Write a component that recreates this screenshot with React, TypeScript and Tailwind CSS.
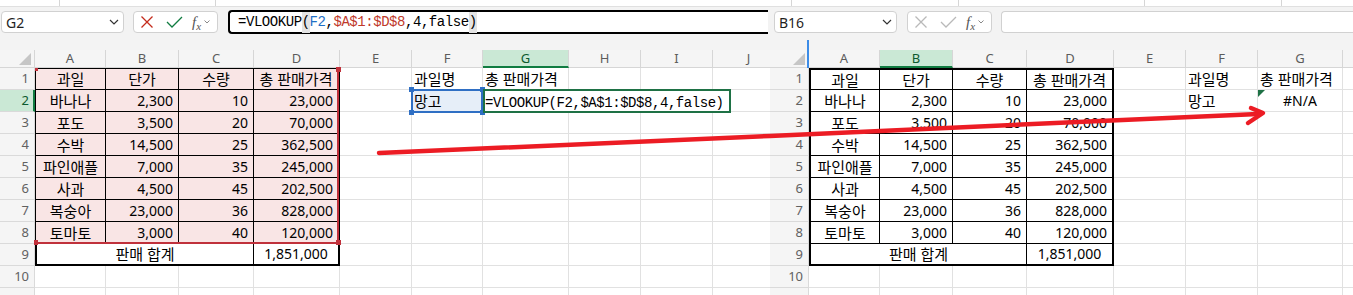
import React from "react";

const fruits: string[][] = [
  ["과일", "단가", "수량", "총 판매가격"],
  ["바나나", "2,300", "10", "23,000"],
  ["포도", "3,500", "20", "70,000"],
  ["수박", "14,500", "25", "362,500"],
  ["파인애플", "7,000", "35", "245,000"],
  ["사과", "4,500", "45", "202,500"],
  ["복숭아", "23,000", "36", "828,000"],
  ["토마토", "3,000", "40", "120,000"],
];

const LW = ["w-[71px]", "w-[73px]", "w-[75px]", "w-[86px]", "w-[72px]", "w-[71px]", "w-[86px]", "w-[72px]", "w-[72px]", "w-[72px]"];
const RW = ["w-[71px]", "w-[73px]", "w-[74px]", "w-[87px]", "w-[72px]", "w-[72px]", "w-[85px]", "w-[72px]"];
const GRID = "border-r border-b border-[#e1e1e1]";

type Spec = { w: string; t?: string; al?: "l" | "c" | "r"; b: string; bg?: string; tri?: boolean };

function tblL(r: number, c: number): string {
  const top = r === 1;
  if (c === 0) return top ? "border-l border-t border-r border-b border-black" : "border-l border-r border-b border-black";
  if (c === 3) return top ? "border-t border-r-2 border-b border-black" : "border-r-2 border-b border-black";
  return top ? "border-t border-r border-b border-black" : "border-r border-b border-black";
}

function tblR(r: number, c: number): string {
  const top = r === 1;
  if (c === 0) return top ? "border-l-2 border-t-2 border-r border-b border-black" : "border-l-2 border-r border-b border-black";
  if (c === 3) return top ? "border-t-2 border-r-2 border-b border-black" : "border-r-2 border-b border-black";
  return top ? "border-t-2 border-r border-b border-black" : "border-r border-b border-black";
}

function buildRows(side: "L" | "R"): Spec[][] {
  const L = side === "L";
  const W = L ? LW : RW;
  const rows: Spec[][] = [];
  for (let r = 1; r <= 11; r++) {
    const row: Spec[] = [];
    if (r <= 8) {
      for (let c = 0; c < 4; c++) {
        row.push({
          w: W[c],
          t: fruits[r - 1][c],
          al: r === 1 || c === 0 ? "c" : "r",
          b: L ? tblL(r, c) : tblR(r, c),
          bg: L ? "bg-[#f9e5e5]" : "bg-white",
        });
      }
    } else if (r === 9) {
      row.push({ w: L ? "w-[219px]" : "w-[218px]", t: "판매 합계", al: "c", b: "border-l-2 border-r border-b-2 border-black" });
      row.push({ w: W[3], t: "1,851,000", al: "c", b: "border-r-2 border-b-2 border-black" });
    } else {
      for (let c = 0; c < 4; c++) row.push({ w: W[c], b: GRID });
    }
    for (let c = 4; c < W.length; c++) {
      const s: Spec = { w: W[c], b: GRID, al: "l" };
      if (r === 1 && c === 5) s.t = "과일명";
      if (r === 1 && c === 6) s.t = "총 판매가격";
      if (r === 2 && c === 5) {
        s.t = "망고";
        if (L) s.bg = "bg-[#e6eef8]";
      }
      if (!L && r === 2 && c === 6) {
        s.t = "#N/A";
        s.al = "c";
        s.tri = true;
      }
      row.push(s);
    }
    rows.push(row);
  }
  return rows;
}

function CellView({ s }: { s: Spec }) {
  const ko = s.t ? /[가-힣]/.test(s.t) : false;
  const size = ko ? "text-[15px]" : "text-[14px]";
  const just = s.al === "c" ? "justify-center" : s.al === "r" ? "justify-end pr-[5px]" : "justify-start pl-[2px]";
  return (
    <div className={`relative flex h-full shrink-0 items-center whitespace-nowrap leading-[22px] text-black ${s.w} ${s.b} ${s.bg ?? "bg-white"} ${size} ${just}`}>
      {s.tri && (
        <svg className="absolute left-0 top-0" width="7" height="7" viewBox="0 0 7 7">
          <polygon points="0,0 7,0 0,7" fill="#1e7145" />
        </svg>
      )}
      {s.t}
    </div>
  );
}

function Sheet({ side }: { side: "L" | "R" }) {
  const L = side === "L";
  const W = L ? LW : RW;
  const letters = L ? ["A", "B", "C", "D", "E", "F", "G", "H", "I", "J"] : ["A", "B", "C", "D", "E", "F", "G", ""];
  const selCol = L ? 6 : 1;
  const rows = buildRows(side);
  return (
    <div className="flex flex-col">
      <div className="flex h-[18px]">
        <div className={`relative h-full shrink-0 border-r border-b border-[#d6d6d6] bg-[#f5f5f5] ${L ? "w-[35px]" : "w-[39px]"}`}>
          <svg className="absolute right-[3px] bottom-[2px]" width="12" height="12" viewBox="0 0 12 12">
            <polygon points="12,0 12,12 0,12" fill="#c6c6c6" />
          </svg>
        </div>
        {W.map((w, i) => (
          <div
            key={i}
            className={`flex h-full shrink-0 items-center justify-center text-[13px] leading-[17px] ${w} ${
              i === selCol
                ? "border-r border-r-[#d6d6d6] border-b-2 border-b-[#107c41] bg-[#cae8d5] text-[#0c5a2f]"
                : "border-r border-b border-[#d6d6d6] bg-[#f5f5f5] text-[#5c5c5c]"
            }`}
          >
            {letters[i]}
          </div>
        ))}
      </div>
      {rows.map((row, ri) => {
        const sel = L && ri === 1;
        return (
          <div key={ri} className="flex h-[22px]">
            <div
              className={`flex h-full shrink-0 items-center justify-end text-[13px] ${L ? "w-[35px]" : "w-[39px]"} ${
                sel
                  ? "border-r-2 border-r-[#107c41] border-b border-b-[#dadada] bg-[#cae8d5] pr-[4px] text-[#0c5a2f]"
                  : "border-r border-b border-[#dadada] bg-[#f5f5f5] pr-[5px] text-[#616161]"
              }`}
            >
              {ri < 10 ? ri + 1 : ""}
            </div>
            {row.map((s, ci) => (
              <CellView key={ci} s={s} />
            ))}
          </div>
        );
      })}
    </div>
  );
}

function NameBox({ label }: { label: string }) {
  return (
    <div className="mt-[1px] flex h-[22px] w-[123px] shrink-0 items-center justify-between rounded-[4px] border border-[#d1d1d1] bg-white pr-[4px] pl-[4px] text-[14px] text-[#1f1f1f]">
      <span>{label}</span>
      <svg width="10" height="6" viewBox="0 0 10 6">
        <path d="M1 1l4 4 4-4" fill="none" stroke="#333" strokeWidth="1.2" />
      </svg>
    </div>
  );
}

function FxButtons({ active }: { active: boolean }) {
  const x = active ? "#c42b1c" : "#b9b9b9";
  const ck = active ? "#107c41" : "#b9b9b9";
  return (
    <div className="mt-[1px] flex h-[22px] w-[85px] shrink-0 items-center rounded-[4px] border border-[#d1d1d1] bg-white">
      <svg className="ml-[6px]" width="14" height="14" viewBox="0 0 14 14">
        <path d="M1.5 1.5L12.5 12.5M12.5 1.5L1.5 12.5" stroke={x} strokeWidth="1.3" />
      </svg>
      <svg className="ml-[12px]" width="17" height="12" viewBox="0 0 17 12">
        <path d="M1 6l5 5L16 1" fill="none" stroke={ck} strokeWidth="1.3" />
      </svg>
      <span className="ml-[9px] font-['Liberation_Serif',serif] text-[15px] leading-[16px] text-[#555] italic">
        f<span className="relative top-[3px] text-[11px]">x</span>
      </span>
      <svg className="ml-[3px]" width="6" height="4" viewBox="0 0 6 4">
        <path d="M0.5 0.5l2.5 2.5 2.5-2.5" fill="none" stroke="#888" strokeWidth="1" />
      </svg>
    </div>
  );
}

export default function App() {
  return (
    <div className="relative flex h-[295px] w-[1353px] overflow-hidden bg-[#f3f3f3] font-['Noto_Sans','Noto_Sans_CJK_KR',sans-serif]">
      {/* Left screenshot */}
      <div className="relative flex w-[770px] shrink-0 flex-col overflow-hidden">
        <div className="flex h-[7px] shrink-0 border-b border-[#e0e0e0] bg-white">
          <div className="w-[59px]" />
          <div className="w-px bg-[#d6d6d6]" />
          <div className="w-[155px]" />
          <div className="w-px bg-[#d6d6d6]" />
        </div>
        <div className="flex h-[43px] shrink-0 items-start pt-[3px] pl-[1px]">
          <NameBox label="G2" />
          <div className="w-[9px] shrink-0" />
          <FxButtons active />
          <div className="w-[10px] shrink-0" />
          <div className="mr-[2px] flex h-[24px] flex-1 items-center rounded-l-[4px] border-y-2 border-l-2 border-black bg-white pl-[8px] font-['Liberation_Mono',monospace] text-[14px] tracking-[-0.45px] whitespace-nowrap text-black">
            <span>=VLOOKUP</span>
            <span className="bg-[#e3e3e3]">(</span>
            <span className="text-[#1f6fc5]">F2</span>
            <span>,</span>
            <span className="text-[#c0392b]">$A$1:$D$8</span>
            <span>,4,false</span>
            <span className="bg-[#e3e3e3]">)</span>
          </div>
        </div>
        <Sheet side="L" />

        {/* range highlight for $A$1:$D$8 */}
        <div className="pointer-events-none absolute top-[68px] left-[35px] h-[176px] w-[304px] border-r-2 border-b-2 border-[#c0313b]" />
        <div className="absolute top-[68px] left-[35px] h-[3px] w-[3px] bg-[#c0313b]" />
        <div className="absolute top-[67px] left-[336px] h-[5px] w-[5px] bg-[#c0313b]" />
        <div className="absolute top-[240px] left-[34px] h-[5px] w-[4px] bg-[#c0313b]" />
        <div className="absolute top-[240px] left-[336px] h-[5px] w-[5px] bg-[#c0313b]" />

        {/* F2 reference box */}
        <div className="pointer-events-none absolute top-[89px] left-[411px] h-[24px] w-[72px] border-2 border-[#2f6fc4]" />
        <div className="absolute top-[87px] left-[409px] h-[5px] w-[5px] bg-[#2f6fc4]" />
        <div className="absolute top-[87px] left-[480px] h-[5px] w-[5px] bg-[#2f6fc4]" />
        <div className="absolute top-[110px] left-[409px] h-[5px] w-[5px] bg-[#2f6fc4]" />
        <div className="absolute top-[110px] left-[480px] h-[5px] w-[5px] bg-[#2f6fc4]" />

        {/* G2 editing cell */}
        <div className="absolute top-[89px] left-[483px] flex h-[24px] w-[248px] items-end border-2 border-[#1e7145] bg-white font-['Liberation_Mono',monospace] text-[14px] leading-[16px] tracking-[-0.45px] whitespace-nowrap text-black">
          =VLOOKUP(F2,$A$1:$D$8,4,false)
        </div>
      </div>

      {/* Right screenshot */}
      <div className="relative flex w-[583px] shrink-0 flex-col overflow-hidden">
        <div className="flex h-[7px] shrink-0 border-b border-[#e0e0e0] bg-white">
          <div className="w-[21px]" />
          <div className="w-px bg-[#d6d6d6]" />
          <div className="w-[166px]" />
          <div className="w-px bg-[#d6d6d6]" />
          <div className="w-[185px]" />
          <div className="w-px bg-[#d6d6d6]" />
          <div className="w-[136px]" />
          <div className="w-px bg-[#d6d6d6]" />
        </div>
        <div className="flex h-[43px] shrink-0 items-start pt-[3px] pl-[4px]">
          <NameBox label="B16" />
          <div className="w-[10px] shrink-0" />
          <FxButtons active={false} />
          <div className="w-[9px] shrink-0" />
          <div className="mt-[1px] h-[22px] flex-1 rounded-l-[4px] border-y border-l border-[#d1d1d1] bg-white" />
        </div>
        <Sheet side="R" />
        <div className="absolute top-[40px] left-[37px] h-[28px] w-[2px] bg-[#3c8ce7]" />
      </div>

      {/* red annotation arrow */}
      <svg className="pointer-events-none absolute top-0 left-0" width="1353" height="295" viewBox="0 0 1353 295">
        <polyline
          points="379,153 770,136 1100,121 1258,114"
          fill="none"
          stroke="#ec1c24"
          strokeWidth="4.5"
          strokeLinecap="round"
          strokeLinejoin="round"
        />
        <polyline
          points="1251,108 1263,113 1248,123"
          fill="none"
          stroke="#ec1c24"
          strokeWidth="4.5"
          strokeLinecap="round"
          strokeLinejoin="round"
        />
      </svg>
    </div>
  );
}
